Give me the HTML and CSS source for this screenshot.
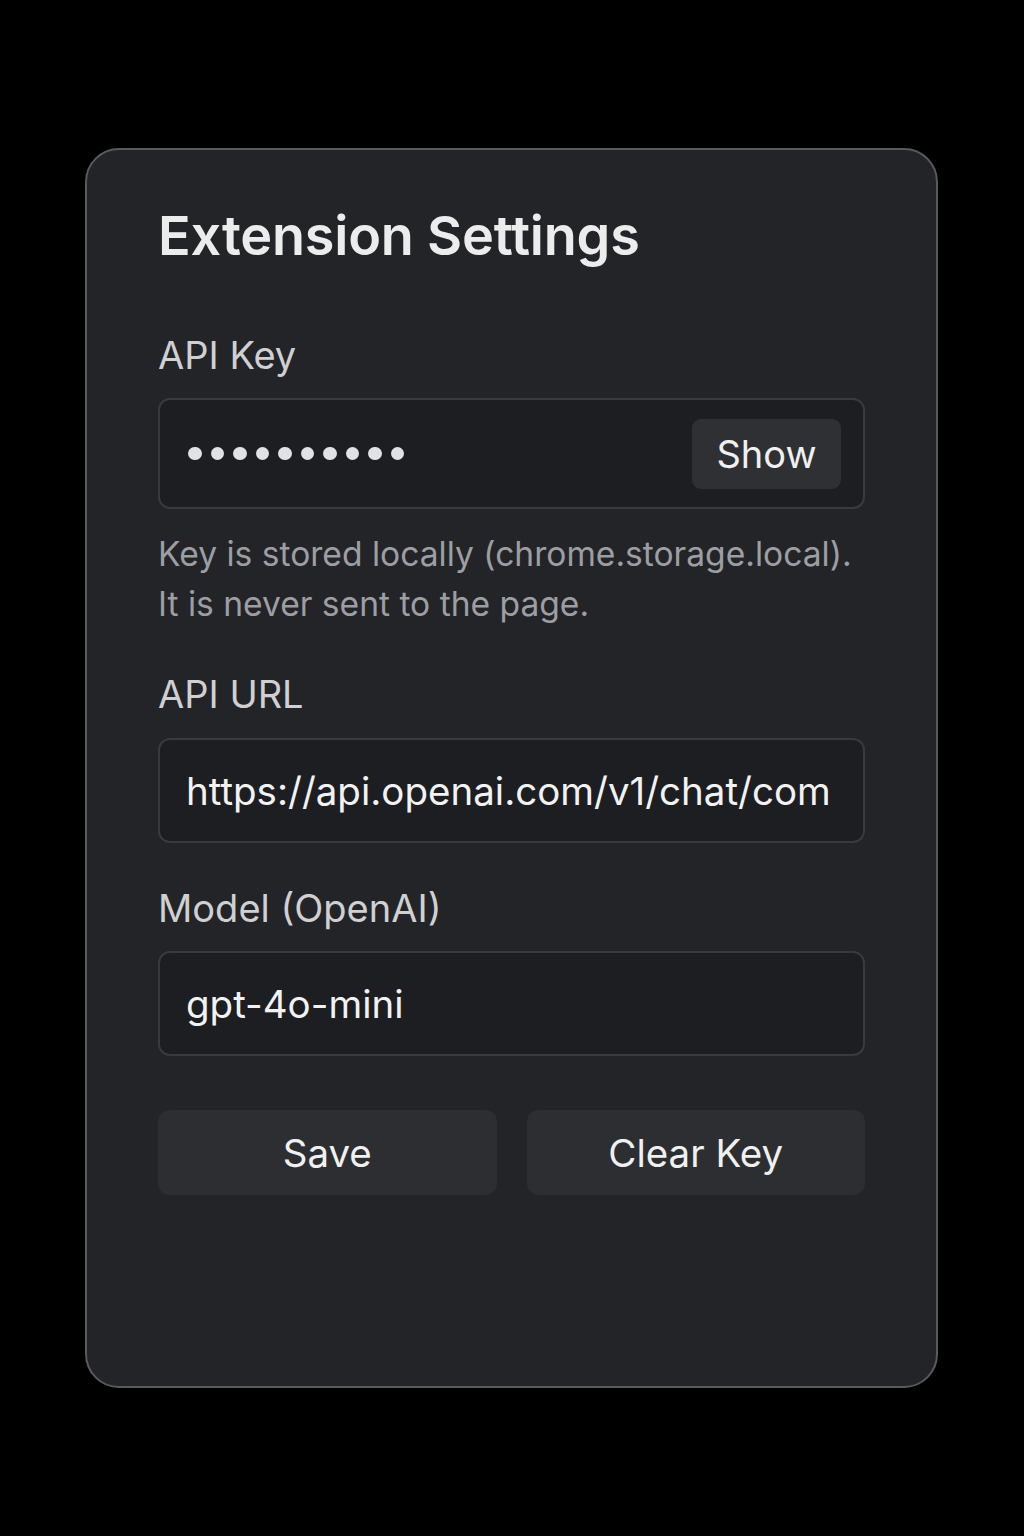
FILE: index.html
```html
<!DOCTYPE html>
<html>
<head>
<meta charset="utf-8">
<link rel="stylesheet" href="styles.css">
</head>
<body>
<div class="card">
  <h1 class="title">Extension Settings</h1>
  <div class="field">
    <label class="label">API Key</label>
    <div class="box box-key">
      <span class="dots" aria-label="hidden key">
        <i></i><i></i><i></i><i></i><i></i><i></i><i></i><i></i><i></i><i></i>
      </span>
      <button class="show">Show</button>
    </div>
    <p class="help">Key is stored locally (chrome.storage.local).<br>It is never sent to the page.</p>
  </div>
  <div class="field field-url">
    <label class="label">API URL</label>
    <input class="box text" type="text" readonly value="https://api.openai.com/v1/chat/completions">
  </div>
  <div class="field field-model">
    <label class="label">Model (OpenAI)</label>
    <input class="box text" type="text" readonly value="gpt-4o-mini">
  </div>
  <div class="actions">
    <button class="btn">Save</button>
    <button class="btn">Clear Key</button>
  </div>
</div>
</body>
</html>
```
FILE: styles.css
```css
html, body {
  margin: 0;
  padding: 0;
  background: #000;
}
body {
  width: 1024px;
  height: 1536px;
  font-family: Inter, "Noto Sans", sans-serif;
  color: #e6e6e6;
  padding-top: 148px;
  box-sizing: border-box;
}
.card {
  margin-left: 85px;
  width: 853px;
  height: 1240px;
  box-sizing: border-box;
  border: 2px solid #595a5e;
  border-radius: 34px;
  background: #232428;
  padding: 0 71px;
}
.title {
  margin: 51px 0 0;
  font-size: 54px;
  font-weight: 600;
  line-height: 70px;
  color: #ececec;
  letter-spacing: -0.2px;
}
.field {
  display: flex;
  flex-direction: column;
}
.label {
  font-size: 38px;
  line-height: 50px;
  color: #d0d0d2;
  margin-top: 59px;
  margin-bottom: 18px;
}
.field-url .label,
.field-model .label {
  margin-top: 40px;
}
.field-url .label {
  margin-bottom: 19px;
}
.box {
  height: 105px;
  box-sizing: border-box;
  border: 2px solid #393a3e;
  border-radius: 12px;
  background: #1d1e22;
  width: 100%;
  margin: 0;
}
.box-key {
  height: 111px;
  display: flex;
  align-items: center;
  justify-content: space-between;
  padding: 0 22px 0 28px;
}
.dots {
  display: flex;
  gap: 9px;
}
.dots i {
  display: block;
  width: 13.5px;
  height: 13.5px;
  border-radius: 50%;
  background: #e2e2e4;
}
.show {
  border: none;
  background: #2f3034;
  color: #f0f0f0;
  font-family: inherit;
  font-size: 38px;
  border-radius: 9px;
  width: 149px;
  height: 70px;
  padding: 0;
}
.text {
  padding: 0 31px 0 26px;
  font-family: inherit;
  font-size: 38.5px;
  color: #f2f2f2;
  outline: none;
}
.help {
  margin: 20px 0 0;
  font-size: 33.6px;
  line-height: 50px;
  color: #9d9ea2;
}
.actions {
  display: grid;
  grid-template-columns: 1fr 1fr;
  gap: 30px;
  margin-top: 54px;
}
.btn {
  height: 85px;
  border: none;
  border-radius: 12px;
  background: #2d2e32;
  color: #f0f0f0;
  font-family: inherit;
  font-size: 38.5px;
  padding: 0;
}
```
